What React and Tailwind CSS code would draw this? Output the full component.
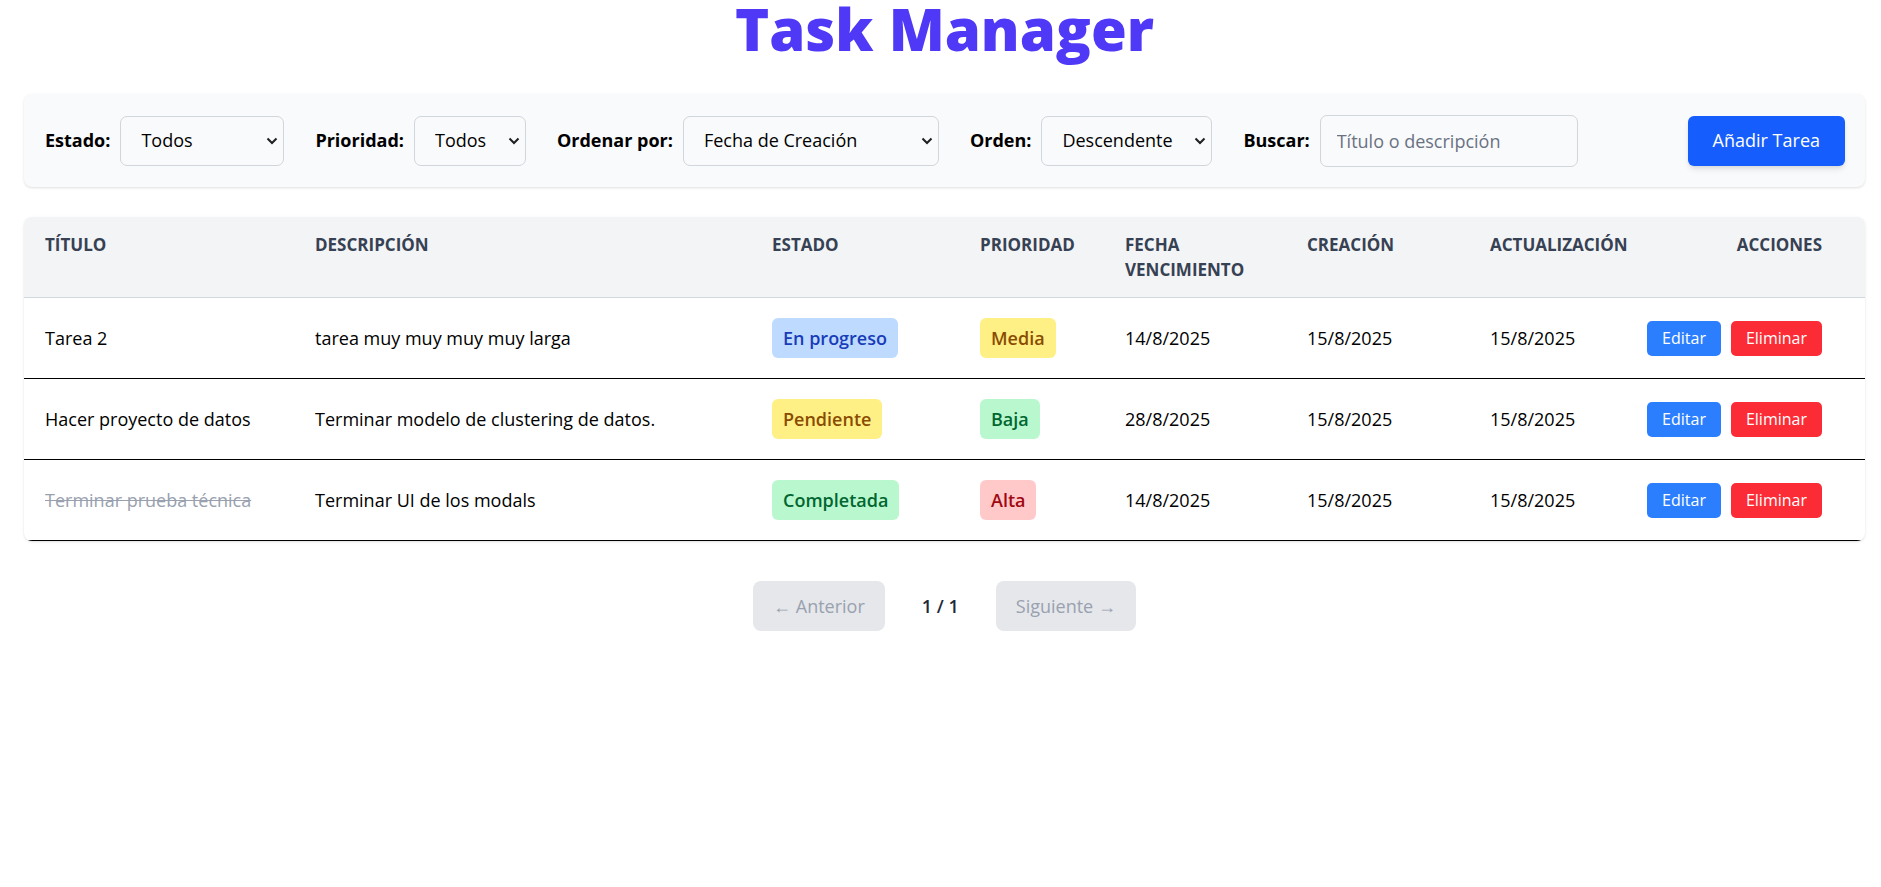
const tasks = [
  {
    title: "Tarea 2",
    description: "tarea muy muy muy muy larga",
    status: "En progreso",
    priority: "Media",
    due: "14/8/2025",
    created: "15/8/2025",
    updated: "15/8/2025",
    done: false,
  },
  {
    title: "Hacer proyecto de datos",
    description: "Terminar modelo de clustering de datos.",
    status: "Pendiente",
    priority: "Baja",
    due: "28/8/2025",
    created: "15/8/2025",
    updated: "15/8/2025",
    done: false,
  },
  {
    title: "Terminar prueba técnica",
    description: "Terminar UI de los modals",
    status: "Completada",
    priority: "Alta",
    due: "14/8/2025",
    created: "15/8/2025",
    updated: "15/8/2025",
    done: true,
  },
];

const statusColors = {
  "En progreso": "bg-blue-200 text-blue-800",
  Pendiente: "bg-yellow-200 text-yellow-800",
  Completada: "bg-green-200 text-green-800",
};

const priorityColors = {
  Alta: "bg-red-200 text-red-800",
  Media: "bg-yellow-200 text-yellow-800",
  Baja: "bg-green-200 text-green-800",
};

function Chevron() {
  return (
    <svg
      className="pointer-events-none absolute right-[6px] top-1/2 -translate-y-1/2"
      width="12"
      height="8"
      viewBox="0 0 12 8"
      fill="none"
    >
      <path d="M1.5 1.5l4.5 4.5 4.5-4.5" stroke="#1f1f1f" strokeWidth="2" />
    </svg>
  );
}

function Select({ label, value, width }) {
  return (
    <div className="flex items-center gap-[10px]">
      <label className="font-bold text-black">{label}</label>
      <div className={`relative ${width}`}>
        <select
          defaultValue={value}
          className="h-[50px] w-full appearance-none rounded-[7px] border border-gray-300 bg-gray-50 pl-[20px] pr-6 text-black outline-none"
        >
          <option>{value}</option>
        </select>
        <Chevron />
      </div>
    </div>
  );
}

function Badge({ text, colors }) {
  return (
    <span className={`inline-block rounded-[6px] px-[11px] py-[7px] leading-[26px] font-semibold ${colors}`}>
      {text}
    </span>
  );
}

export default function App() {
  return (
    <div className="min-h-screen overflow-hidden bg-white pl-6 pr-4 font-['Open_Sans',sans-serif] text-[18px] text-black">
      {/* Title */}
      <h1 className="mb-[37px] text-center text-[58px] font-extrabold leading-[57px] text-indigo-600">
        Task Manager
      </h1>

      {/* Filters */}
      <div className="flex h-[93px] items-center rounded-lg bg-gray-50 pl-[21px] pr-[20px] shadow-sm">
        <div className="flex items-center gap-[31px]">
          <Select label="Estado:" value="Todos" width="w-[164px]" />
          <Select label="Prioridad:" value="Todos" width="w-[112px]" />
          <Select label="Ordenar por:" value="Fecha de Creación" width="w-[256px]" />
          <Select label="Orden:" value="Descendente" width="w-[171px]" />
          <div className="flex items-center gap-[10px]">
            <label className="font-bold text-black">Buscar:</label>
            <input
              placeholder="Título o descripción"
              className="h-[52px] w-[258px] rounded-[7px] border border-gray-300 bg-gray-50 pl-[16px] outline-none placeholder:text-gray-500"
            />
          </div>
        </div>
        <button className="ml-auto h-[50px] rounded-[6px] bg-blue-600 px-[25px] text-white shadow-md">
          Añadir Tarea
        </button>
      </div>

      {/* Table */}
      <div className="mt-[30px] overflow-hidden rounded-lg bg-white shadow">
        <table className="w-full table-fixed border-collapse text-left">
          <colgroup>
            <col className="w-[270px]" />
            <col className="w-[457px]" />
            <col className="w-[208px]" />
            <col className="w-[145px]" />
            <col className="w-[182px]" />
            <col className="w-[183px]" />
            <col className="w-[180px]" />
            <col />
          </colgroup>
          <thead className="bg-gray-100">
            <tr className="border-b border-gray-300 align-top text-[17px] font-bold uppercase leading-[25px] text-gray-700">
              <th className="px-[21px] py-[15px]">Título</th>
              <th className="px-[21px] py-[15px]">Descripción</th>
              <th className="px-[21px] py-[15px]">Estado</th>
              <th className="px-[21px] py-[15px]">Prioridad</th>
              <th className="px-[21px] py-[15px]">
                Fecha
                <br />
                Vencimiento
              </th>
              <th className="px-[21px] py-[15px]">Creación</th>
              <th className="whitespace-nowrap px-[21px] py-[15px]">Actualización</th>
              <th className="py-[15px] pr-[43px] text-right">Acciones</th>
            </tr>
          </thead>
          <tbody>
            {tasks.map((t) => (
              <tr key={t.title} className="h-[81px] border-b border-black">
                <td className={`px-[21px] ${t.done ? "text-gray-400 line-through" : ""}`}>{t.title}</td>
                <td className="px-[21px]">{t.description}</td>
                <td className="px-[21px]">
                  <Badge text={t.status} colors={statusColors[t.status]} />
                </td>
                <td className="px-[21px]">
                  <Badge text={t.priority} colors={priorityColors[t.priority]} />
                </td>
                <td className="px-[21px]">{t.due}</td>
                <td className="px-[21px]">{t.created}</td>
                <td className="px-[21px]">{t.updated}</td>
                <td className="pr-[43px]">
                  <div className="flex justify-end gap-[10px] text-[16px]">
                    <button className="h-[35px] rounded-[5px] bg-blue-500 px-[15px] text-white">Editar</button>
                    <button className="h-[35px] rounded-[5px] bg-red-500 px-[15px] text-white">Eliminar</button>
                  </div>
                </td>
              </tr>
            ))}
          </tbody>
        </table>
      </div>

      {/* Pagination */}
      <div className="mt-[40px] flex items-center justify-center gap-[37px]">
        <button className="h-[50px] rounded-lg bg-gray-200 px-[20px] text-gray-400">← Anterior</button>
        <span className="font-semibold text-gray-800">1 / 1</span>
        <button className="h-[50px] rounded-lg bg-gray-200 px-[20px] text-gray-400">Siguiente →</button>
      </div>
    </div>
  );
}
